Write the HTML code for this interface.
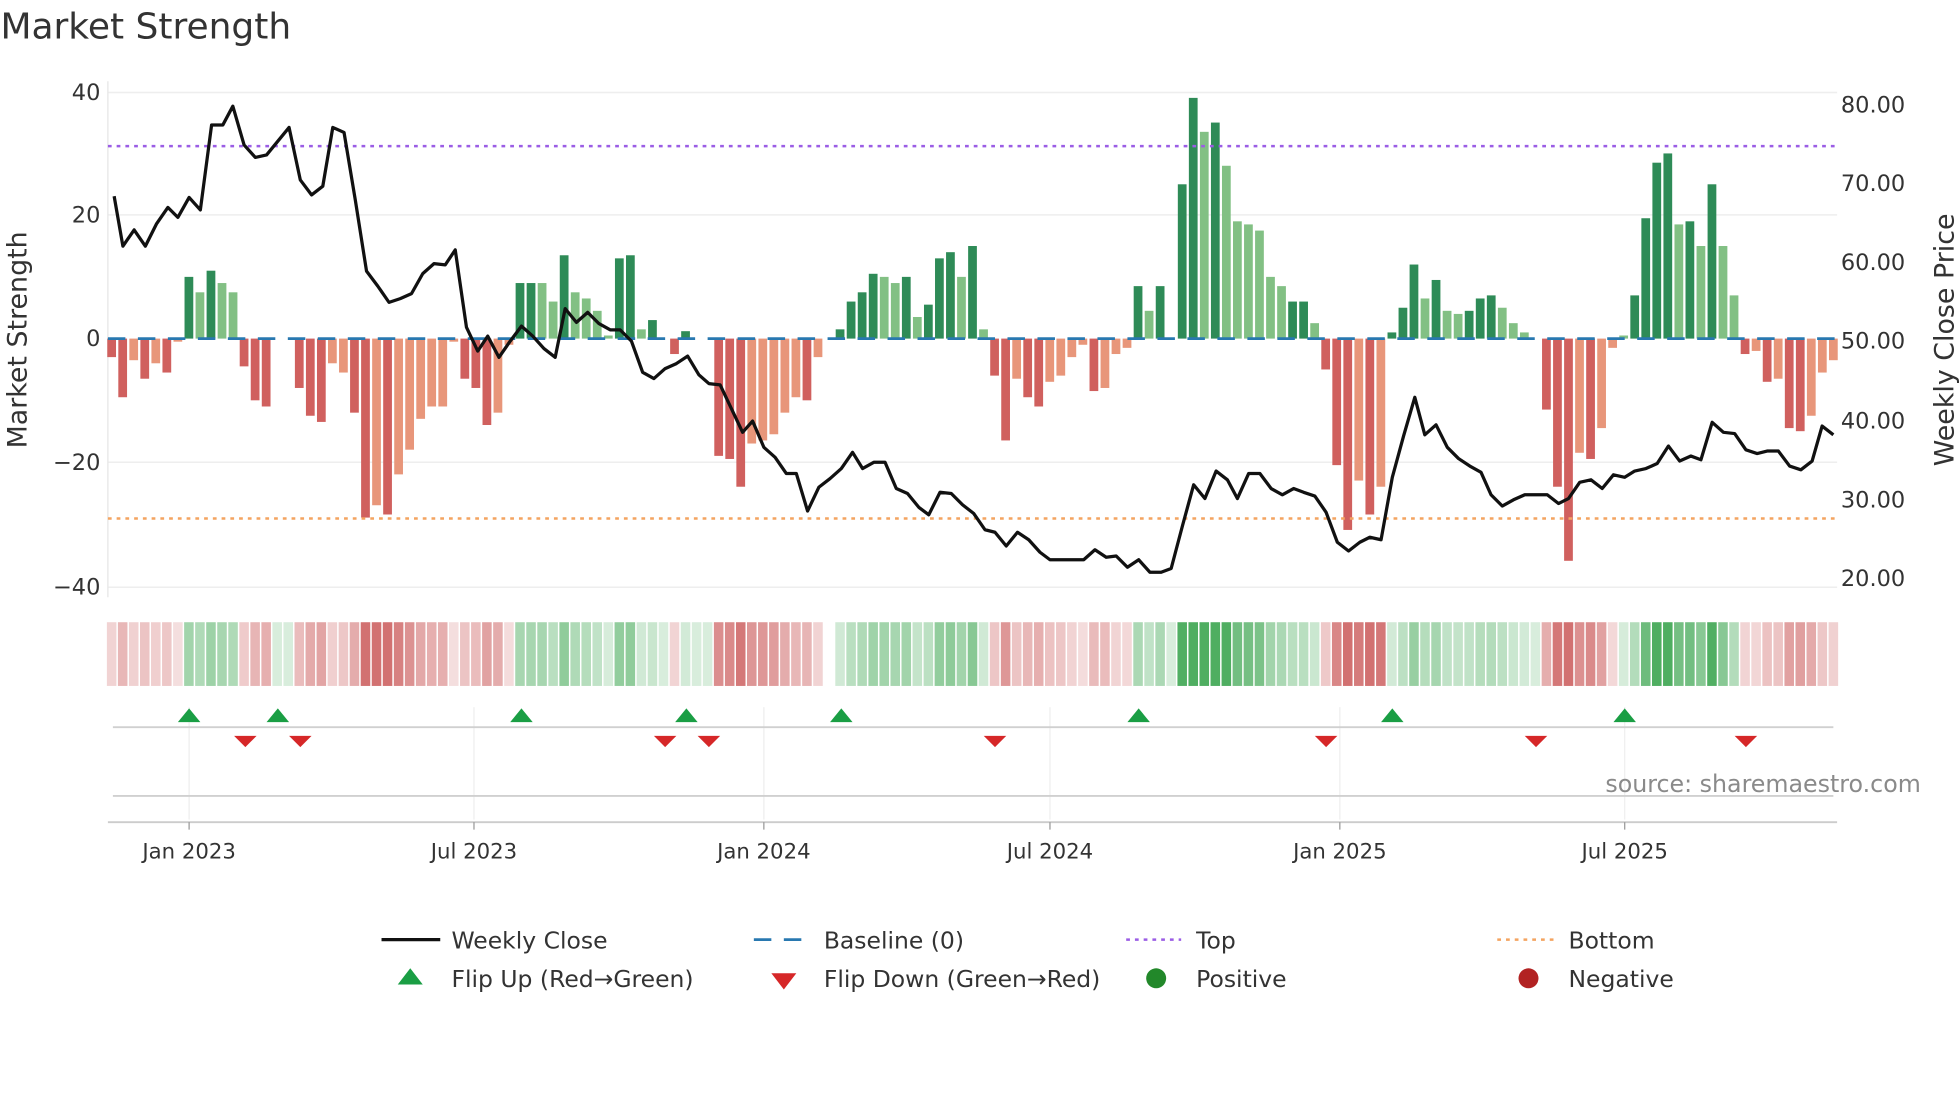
<!DOCTYPE html>
<html><head><meta charset="utf-8"><style>
html,body{margin:0;padding:0;background:#fff;width:1960px;height:1102px;overflow:hidden}
svg{display:block;font-family:"DejaVu Sans","Liberation Sans",sans-serif}
</style></head><body>
<svg id="s" width="1960" height="1102" viewBox="0 0 1568 882" xmlns="http://www.w3.org/2000/svg">
<rect width="1568" height="882" fill="#fff"/>
<text x="0" y="31" font-size="28.8" fill="#333">Market Strength</text>
<g stroke="#eeeeee" stroke-width="1.2">
<line x1="86" y1="74" x2="1470" y2="74"/><line x1="86" y1="172" x2="1470" y2="172"/>
<line x1="86" y1="370" x2="1470" y2="370"/><line x1="86" y1="470" x2="1470" y2="470"/>
</g>
<line x1="86" y1="65" x2="86" y2="478" stroke="#e6e6e6"/>
<g font-size="18" fill="#333" text-anchor="end">
<text x="80" y="80">40</text><text x="80" y="178">20</text><text x="80" y="277">0</text>
<text x="80" y="376">−20</text><text x="80" y="476">−40</text>
</g>
<g font-size="18" fill="#333">
<text x="1473" y="90">80.00</text><text x="1473" y="153">70.00</text><text x="1473" y="216">60.00</text>
<text x="1473" y="279">50.00</text><text x="1473" y="343">40.00</text><text x="1473" y="406">30.00</text><text x="1473" y="469">20.00</text>
</g>
<text transform="translate(21,272) rotate(-90)" font-size="21.5" fill="#333" text-anchor="middle">Market Strength</text>
<text transform="translate(1563,272) rotate(-90)" font-size="21.5" fill="#333" text-anchor="middle">Weekly Close Price</text>
<g id="bars"></g>
<line x1="86" y1="271" x2="1470" y2="271" stroke="#2878b0" stroke-width="2.2" stroke-dasharray="14,10"/>
<line x1="86" y1="117" x2="1470" y2="117" stroke="#9b5de5" stroke-width="2" stroke-dasharray="3,4"/>
<line x1="86" y1="415" x2="1470" y2="415" stroke="#f4a460" stroke-width="2" stroke-dasharray="3,4"/>
<polyline id="ln" fill="none" stroke="#111" stroke-width="2.6" stroke-linejoin="round"/>
<g id="heat"></g>
<g stroke="#eeeeee" stroke-width="1">
<line x1="151" y1="566" x2="151" y2="656"/><line x1="379" y1="566" x2="379" y2="656"/>
<line x1="611" y1="566" x2="611" y2="656"/><line x1="840" y1="566" x2="840" y2="656"/>
<line x1="1072" y1="566" x2="1072" y2="656"/><line x1="1300" y1="566" x2="1300" y2="656"/>
</g>
<line x1="90" y1="582" x2="1467" y2="582" stroke="#d0d0d0" stroke-width="1.5"/>
<line x1="90" y1="637" x2="1467" y2="637" stroke="#d0d0d0" stroke-width="1.5"/>
<line x1="86" y1="658" x2="1470" y2="658" stroke="#cccccc" stroke-width="1.5"/>
<g id="mk"></g>
<text x="1537" y="634" font-size="19" fill="#8a8a8a" text-anchor="end">source: sharemaestro.com</text>
<g stroke="#999" stroke-width="1">
<line x1="151" y1="658" x2="151" y2="664"/><line x1="379" y1="658" x2="379" y2="664"/>
<line x1="611" y1="658" x2="611" y2="664"/><line x1="840" y1="658" x2="840" y2="664"/>
<line x1="1072" y1="658" x2="1072" y2="664"/><line x1="1300" y1="658" x2="1300" y2="664"/>
</g>
<g font-size="17" fill="#333" text-anchor="middle">
<text x="151" y="687">Jan 2023</text><text x="379" y="687">Jul 2023</text><text x="611" y="687">Jan 2024</text>
<text x="840" y="687">Jul 2024</text><text x="1072" y="687">Jan 2025</text><text x="1300" y="687">Jul 2025</text>
</g>
<g font-size="18.8" fill="#333">
<line x1="305" y1="752" x2="352" y2="752" stroke="#111" stroke-width="2.6"/><text x="361" y="759">Weekly Close</text>
<line x1="603" y1="752" x2="648" y2="752" stroke="#2878b0" stroke-width="2.2" stroke-dasharray="14,10"/><text x="659" y="759">Baseline (0)</text>
<line x1="901" y1="752" x2="945" y2="752" stroke="#9b5de5" stroke-width="2" stroke-dasharray="3,4"/><text x="957" y="759">Top</text>
<line x1="1198" y1="752" x2="1243" y2="752" stroke="#f4a460" stroke-width="2" stroke-dasharray="3,4"/><text x="1255" y="759">Bottom</text>
<polygon points="318,788 338,788 328,775" fill="#1a9e44"/><text x="361" y="790">Flip Up (Red→Green)</text>
<polygon points="617,779 637,779 627,792" fill="#d62728"/><text x="659" y="790">Flip Down (Green→Red)</text>
<circle cx="925" cy="783" r="8" fill="#22882a"/><text x="957" y="790">Positive</text>
<circle cx="1223" cy="783" r="8" fill="#b22222"/><text x="1255" y="790">Negative</text>
</g>
</svg>
<script>
var V=[-3,'D',-9.5,'D',-3.5,'L',-6.5,'D',-4,'L',-5.5,'D',-0.5,'L',10,'D',7.5,'L',11,'D',9,'L',7.5,'L',-4.5,'D',-10,'D',-11,'D',0,'L',0,'L',-8,'D',-12.5,'D',-13.5,'D',-4,'L',-5.5,'L',-12,'D',-29,'D',-27,'L',-28.5,'D',-22,'L',-18,'L',-13,'L',-11,'L',-11,'L',-0.5,'L',-6.5,'D',-8,'D',-14,'D',-12,'L',-1,'L',9,'D',9,'D',9,'L',6,'L',13.5,'D',7.5,'L',6.5,'L',4.5,'L',0.5,'L',13,'D',13.5,'D',1.5,'L',3,'D',0,'L',-2.5,'D',1.2,'D',0,'L',0,'L',-19,'D',-19.5,'D',-24,'D',-17,'L',-16.5,'L',-15.5,'L',-12,'L',-9.5,'L',-10,'D',-3,'L',0,'L',1.5,'D',6,'D',7.5,'D',10.5,'D',10,'L',9,'L',10,'D',3.5,'L',5.5,'D',13,'D',14,'D',10,'L',15,'D',1.5,'L',-6,'D',-16.5,'D',-6.5,'L',-9.5,'D',-11,'D',-7,'L',-6,'L',-3,'L',-1,'L',-8.5,'D',-8,'L',-2.5,'L',-1.5,'L',8.5,'D',4.5,'L',8.5,'D',0,'L',25,'D',39,'D',33.5,'L',35,'D',28,'L',19,'L',18.5,'L',17.5,'L',10,'L',8.5,'L',6,'D',6,'D',2.5,'L',-5,'D',-20.5,'D',-31,'D',-23,'L',-28.5,'D',-24,'L',1,'D',5,'D',12,'D',6.5,'L',9.5,'D',4.5,'L',4,'L',4.5,'D',6.5,'D',7,'D',5,'L',2.5,'L',1,'L',0,'L',-11.5,'D',-24,'D',-36,'D',-18.5,'L',-19.5,'D',-14.5,'L',-1.5,'L',0.5,'L',7,'D',19.5,'D',28.5,'D',30,'D',18.5,'L',19,'D',15,'L',25,'D',15,'L',7,'L',-2.5,'D',-2,'L',-7,'D',-6.5,'L',-14.5,'D',-15,'D',-12.5,'L',-5.5,'L',-3.5,'L'];
var P=[[91,157],[98,197],[107,184],[116,197],[125,179],[134,166],[142,174],[151,158],[160,168],[169,100],[178,100],[186,85],[195,116],[204,126],[213,124],[222,113],[231,102],[240,144],[249,156],[258,149],[266,102],[275,106],[284,160],[293,217],[302,229],[311,242],[320,239],[329,235],[338,219],[347,211],[356,212],[364,200],[373,262],[382,281],[390,269],[399,286],[408,273],[417,261],[426,269],[435,279],[444,286],[452,247],[461,258],[470,250],[479,259],[488,264],[496,264],[505,273],[514,298],[523,303],[532,295],[541,291],[550,285],[559,300],[567,307],[576,308],[585,327],[594,346],[602,337],[611,358],[620,366],[629,379],[637,379],[646,409],[655,390],[664,383],[673,375],[682,362],[690,375],[699,370],[708,370],[717,391],[726,395],[735,406],[743,412],[752,394],[761,395],[770,404],[779,411],[788,424],[796,426],[805,437],[814,426],[823,432],[832,442],[840,448],[849,448],[858,448],[867,448],[876,440],[885,446],[893,445],[902,454],[911,448],[920,458],[929,458],[937,455],[946,421],[955,388],[964,399],[973,377],[982,384],[990,399],[999,379],[1008,379],[1017,391],[1026,396],[1035,391],[1043,394],[1052,397],[1061,410],[1070,434],[1079,441],[1088,434],[1096,430],[1105,432],[1114,382],[1123,349],[1132,318],[1140,348],[1149,340],[1158,358],[1167,367],[1176,373],[1185,378],[1193,396],[1202,405],[1211,400],[1220,396],[1229,396],[1238,396],[1247,403],[1255,399],[1264,386],[1273,384],[1282,391],[1291,380],[1300,382],[1308,377],[1317,375],[1326,371],[1335,357],[1344,369],[1353,365],[1361,368],[1370,338],[1379,346],[1388,347],[1397,360],[1406,363],[1414,361],[1423,361],[1432,373],[1441,376],[1450,369],[1458,341],[1467,348]];
var NS='http://www.w3.org/2000/svg';
function el(g,t,a){var e=document.createElementNS(NS,t);for(var k in a)e.setAttribute(k,a[k]);g.appendChild(e);return e;}
var bars=document.getElementById('bars'),heat=document.getElementById('heat');
var n=V.length/2,step=(1467-89)/(n-1);
for(var i=0;i<n;i++){
 var v=V[2*i],t=V[2*i+1],x=89+i*step,h=Math.abs(v)*4.94;
 var c=v>=0?(t=='D'?'#2e8b57':'#82c084'):(t=='D'?'#d0605e':'#e8967a');
 if(h>0.3) el(bars,'rect',{x:x-3.5,y:v>=0?271-h:271,width:7,height:h,fill:c});
 var a=Math.min(0.9,0.2+Math.abs(v)/40*1.1);
 var hc=v>=0?'rgba(60,165,80,'+a.toFixed(2)+')':'rgba(196,70,70,'+(a*0.85).toFixed(2)+')';
 if(Math.abs(x-664)>3) el(heat,'rect',{x:x-step/2+0.6,y:498,width:step-1.2,height:51,fill:hc});
}
document.getElementById('ln').setAttribute('points',P.map(function(p){return p.join(',')}).join(' '));
var mk=document.getElementById('mk');
[151,222,417,549,673,911,1114,1300].forEach(function(x){el(mk,'polygon',{points:(x-9)+',578 '+(x+9)+',578 '+x+',567',fill:'#1a9e44'})});
[196,240,532,567,796,1061,1229,1397].forEach(function(x){el(mk,'polygon',{points:(x-9)+',589 '+(x+9)+',589 '+x+',598',fill:'#d62728'})});
</script>
</body></html>
